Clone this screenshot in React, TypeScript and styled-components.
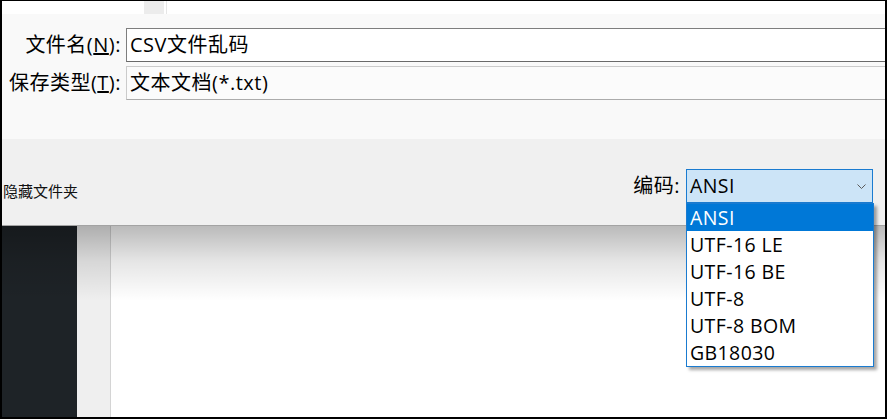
import React from "react";
import styled, { createGlobalStyle } from "styled-components";

const Global = createGlobalStyle`
  html, body { margin: 0; padding: 0; background: #fff; }
  * { box-sizing: border-box; }
`;

const UI_FONT = `"Open Sans", "Noto Sans CJK SC", sans-serif`;

const Frame = styled.div`
  width: 887px;
  height: 419px;
  border: solid #000;
  border-width: 1px 2px 2px 2px;
  overflow: hidden;
  display: flex;
  flex-direction: column;
  font-family: ${UI_FONT};
  color: #000;
  background: #fff;
`;

const TopStrip = styled.div`
  height: 13px;
  flex: none;
  display: flex;
  background: #fff;
`;

const TabStub = styled.div`
  width: 20px;
  margin-left: 142px;
  background: #ececec;
`;

const TabDivider = styled.div`
  width: 1px;
  margin-left: 2px;
  background: #e6e6e6;
`;

const FormPanel = styled.div`
  height: 125px;
  flex: none;
  background: #f9f9f9;
  padding-top: 14px;
  display: grid;
  grid-template-columns: 124px 1fr;
  grid-auto-rows: 34px;
  row-gap: 4px;
  overflow: hidden;
`;

const FieldLabel = styled.label`
  text-align: right;
  padding-right: 5px;
  font-size: 20px;
  letter-spacing: 0.5px;
  line-height: 34px;
  white-space: nowrap;
`;

const Field = styled.div<{ $focused?: boolean }>`
  width: calc(100% + 6px);
  height: 34px;
  border: 1px solid ${(p) => (p.$focused ? "#7e7e7e" : "#cbcbcb")};
  border-bottom-color: ${(p) => (p.$focused ? "#6a6a6a" : "#ababab")};
  background: ${(p) => (p.$focused ? "#ffffff" : "#fbfbfb")};
  padding-left: 3px;
  font-size: 20px;
  letter-spacing: 0.5px;
  line-height: 32px;
  white-space: nowrap;
`;

const BottomBar = styled.div`
  height: 87px;
  flex: none;
  background: #f0f0f0;
  border-bottom: 1px solid #a3a3a3;
  position: relative;
  z-index: 3;
  display: flex;
  align-items: flex-start;
  justify-content: space-between;
  padding: 30px 12px 0 1px;
`;

const HiddenLabel = styled.span`
  margin-top: 12px;
  font-family: "Noto Sans CJK SC", sans-serif;
  font-size: 15px;
  line-height: 20px;
  color: #111;
`;

const EncodingGroup = styled.div`
  display: flex;
  align-items: center;
  gap: 6px;
`;

const EncodingLabel = styled.span`
  font-size: 20px;
  letter-spacing: 0.5px;
  line-height: 34px;
`;

const ComboWrap = styled.div`
  position: relative;
`;

const Combo = styled.div`
  width: 187px;
  height: 34px;
  border: 1px solid #1a7bd0;
  background: #cce4f7;
  display: flex;
  align-items: center;
  justify-content: space-between;
  padding: 0 6px 0 3px;
`;

const ComboValue = styled.span`
  font-size: 19.5px;
  letter-spacing: 0.4px;
  line-height: 32px;
`;

const DropList = styled.ul`
  position: absolute;
  left: 0;
  top: 100%;
  width: 188px;
  margin: 0;
  padding: 0;
  list-style: none;
  background: #fff;
  border: 1px solid #1a7bd0;
  box-shadow: 3px 3px 3px rgba(0, 0, 0, 0.35);
`;

const DropItem = styled.li<{ $selected?: boolean }>`
  height: 27px;
  line-height: 27px;
  padding-left: 3px;
  font-size: 19.5px;
  letter-spacing: 0.4px;
  white-space: nowrap;
  background: ${(p) => (p.$selected ? "#0078d7" : "transparent")};
  color: ${(p) => (p.$selected ? "#fff" : "#000")};
`;

const Browser = styled.div`
  flex: 1;
  display: flex;
  position: relative;
  &::after {
    content: "";
    position: absolute;
    left: 0;
    right: 0;
    top: 0;
    height: 75px;
    pointer-events: none;
    background: linear-gradient(
      rgba(0, 0, 0, 0.27),
      rgba(0, 0, 0, 0.1) 35px,
      rgba(0, 0, 0, 0)
    );
  }
`;

const Sidebar = styled.div`
  width: 75px;
  background: #1e2327;
`;

const Gutter = styled.div`
  width: 34px;
  background: #efefef;
  border-right: 1px solid #d4d4d4;
`;

const Content = styled.div`
  flex: 1;
  background: #fff;
`;

const Chevron = () => (
  <svg width="9" height="5" viewBox="0 0 9 5" style={{ display: "block" }}>
    <polyline points="0.5,0.5 4.5,4.5 8.5,0.5" fill="none" stroke="#5a5a5a" strokeWidth="1" />
  </svg>
);

const encodings = ["ANSI", "UTF-16 LE", "UTF-16 BE", "UTF-8", "UTF-8 BOM", "GB18030"];

export default function App() {
  return (
    <>
      <Global />
      <Frame>
        <TopStrip>
          <TabStub />
          <TabDivider />
        </TopStrip>
        <FormPanel>
          <FieldLabel>
            文件名(<u>N</u>):
          </FieldLabel>
          <Field $focused>CSV文件乱码</Field>
          <FieldLabel>
            保存类型(<u>T</u>):
          </FieldLabel>
          <Field>文本文档(*.txt)</Field>
        </FormPanel>
        <BottomBar>
          <HiddenLabel>隐藏文件夹</HiddenLabel>
          <EncodingGroup>
            <EncodingLabel>编码:</EncodingLabel>
            <ComboWrap>
              <Combo>
                <ComboValue>ANSI</ComboValue>
                <Chevron />
              </Combo>
              <DropList>
                {encodings.map((e, i) => (
                  <DropItem key={e} $selected={i === 0}>
                    {e}
                  </DropItem>
                ))}
              </DropList>
            </ComboWrap>
          </EncodingGroup>
        </BottomBar>
        <Browser>
          <Sidebar />
          <Gutter />
          <Content />
        </Browser>
      </Frame>
    </>
  );
}
